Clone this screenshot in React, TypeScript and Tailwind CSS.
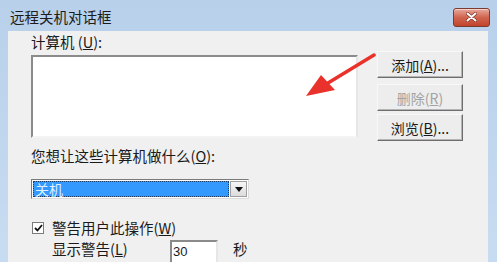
import React from 'react';

const font = { fontFamily: '"Noto Sans CJK SC", "Liberation Sans", sans-serif' };

const Btn: React.FC<{ children: React.ReactNode; disabled?: boolean; className?: string }> = ({ children, disabled, className }) => (
  <div
    className={`w-[86px] h-[27px] flex items-center justify-center text-[14px] leading-none border border-t-[#f8f8f8] border-l-[#f8f8f8] border-b-[#6e6e6e] border-r-[#6e6e6e] bg-[#ededed] shadow-[inset_-1px_-1px_0_#b5b5b5] ${disabled ? 'text-[#a3a3a3]' : 'text-[#1a1a1a]'} ${className ?? ''}`}
  >
    {children}
  </div>
);

const App: React.FC = () => {
  return (
    <div className="w-[497px] h-[262px] overflow-hidden flex flex-col bg-gradient-to-b from-[#b8d0ea] to-[#c8dcf1]" style={font}>
      {/* Title bar */}
      <div className="h-[31px] shrink-0 flex items-center justify-between pl-[10px] pr-[7px] pt-[3px]">
        <span className="text-[14.5px] text-[#1c1c1c] leading-none">远程关机对话框</span>
        <div className="w-[37px] h-[19px] rounded-[3px] border border-[#7b3b30] bg-gradient-to-b from-[#e9a89a] via-[#d0644e] to-[#c2432b] flex items-center justify-center shadow-[inset_0_1px_0_rgba(255,255,255,0.5)]">
          <svg width="11" height="10" viewBox="0 0 11 10">
            <path d="M1.5 1.5 L9.5 8.5 M9.5 1.5 L1.5 8.5" stroke="#7a2a20" strokeWidth="3.2" strokeLinecap="round" />
            <path d="M1.5 1.5 L9.5 8.5 M9.5 1.5 L1.5 8.5" stroke="#ffffff" strokeWidth="2" strokeLinecap="round" />
          </svg>
        </div>
      </div>

      {/* Content panel */}
      <div className="relative flex-1 ml-[8px] mr-[9px] bg-[#f0f0f0] pl-[23px] pt-[2px] text-[14.5px] text-[#1a1a1a]">
        <div className="h-[18px] leading-[18px]">
          计算机 (<u>U</u>):
        </div>

        <div className="flex">
          <div className="mt-[4px] w-[327px] h-[83px] bg-white border-2 border-t-[#8a8a8a] border-l-[#8a8a8a] border-b-[#f4f4f4] border-r-[#e6e6e6]" />
          <div className="ml-[19px] flex flex-col">
            <Btn>添加(<u>A</u>)...</Btn>
            <Btn disabled className="mt-[6px]">删除(<u>R</u>)</Btn>
            <Btn className="mt-[3px]">浏览(<u>B</u>)...</Btn>
          </div>
        </div>

        <div className="mt-[6px] h-[18px] leading-[18px]">
          您想让这些计算机做什么(<u>O</u>):
        </div>

        <div className="mt-[14px] w-[218px] h-[20px] flex border border-t-[#7a7a7a] border-l-[#7a7a7a] border-b-[#dcdcdc] border-r-[#dcdcdc] bg-white p-[1px]">
          <div className="flex-1 bg-[#3399ff] border border-dotted border-[#1c3c66] flex items-center pl-[1px] text-[14px] text-[#dff0ff] leading-none">
            关机
          </div>
          <div className="w-[17px] ml-[1px] bg-gradient-to-b from-[#f6f6f6] to-[#dcdcdc] border border-[#a0a0a0] flex items-center justify-center">
            <svg width="8" height="5" viewBox="0 0 8 5">
              <path d="M0 0 H8 L4 5 Z" fill="#111" />
            </svg>
          </div>
        </div>

        <div className="mt-[21px] h-[16px] flex items-center">
          <div className="ml-[1px] w-[12px] h-[12px] bg-white border border-[#7b7b7b] flex items-center justify-center">
            <svg width="9" height="8" viewBox="0 0 9 8">
              <path d="M1 4 L3.5 6.5 L8 1" stroke="#111" strokeWidth="1.8" fill="none" />
            </svg>
          </div>
          <span className="ml-[8px] leading-none">警告用户此操作(<u>W</u>)</span>
        </div>

        <div className="h-[26px] flex items-center pl-[21px]">
          <span className="w-[118px] leading-none">显示警告(<u>L</u>)</span>
          <div className="w-[48px] h-[26px] mt-[4px] self-start bg-white border-2 border-t-[#8a8a8a] border-l-[#8a8a8a] border-b-[#f4f4f4] border-r-[#e6e6e6] pl-[1px] text-[13px] leading-[20px]" style={{ fontFamily: '"Liberation Sans", sans-serif' }}>
            30
          </div>
          <span className="ml-[15px] leading-none">秒</span>
        </div>

        {/* red annotation arrow */}
        <svg className="absolute left-[296px] top-[22px]" width="72" height="48" viewBox="0 0 72 48">
          <path d="M70 2 L24 30" stroke="#e8322b" strokeWidth="3.5" strokeLinecap="round" />
          <path d="M2 43 L17 22 L31 37 Z" fill="#e8322b" />
        </svg>
      </div>
    </div>
  );
};

export default App;
